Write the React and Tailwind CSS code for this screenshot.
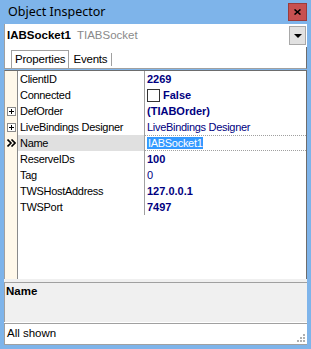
import React from 'react';

const rows = [
  { name: 'ClientID', value: '2269', bold: true },
  { name: 'Connected', value: 'False', bold: true, check: true },
  { name: 'DefOrder', value: '(TIABOrder)', bold: true, plus: true },
  { name: 'LiveBindings Designer', value: 'LiveBindings Designer', plus: true },
  { name: 'Name', value: 'IABSocket1', selected: true },
  { name: 'ReserveIDs', value: '100', bold: true },
  { name: 'Tag', value: '0' },
  { name: 'TWSHostAddress', value: '127.0.0.1', bold: true },
  { name: 'TWSPort', value: '7497', bold: true },
];

const PlusBox = () => (
  <svg width="9" height="9" viewBox="0 0 9 9" className="block">
    <rect x="0.5" y="0.5" width="8" height="8" fill="#fff" stroke="#8a8a8a" />
    <path d="M2 4.5h5M4.5 2v5" stroke="#000" strokeWidth="1" />
  </svg>
);

const Chevrons = () => (
  <svg width="9" height="8" viewBox="0 0 9 8" className="block">
    <path d="M0.5 0.5l3.5 3.5-3.5 3.5M4.5 0.5l3.5 3.5-3.5 3.5" fill="none" stroke="#000" strokeWidth="1.6" />
  </svg>
);

const Grip = () => (
  <svg width="10" height="10" viewBox="0 0 10 10" className="block">
    <g fill="#b0b0b0">
      <rect x="7" y="1" width="2" height="2" />
      <rect x="4" y="4" width="2" height="2" />
      <rect x="7" y="4" width="2" height="2" />
      <rect x="1" y="7" width="2" height="2" />
      <rect x="4" y="7" width="2" height="2" />
      <rect x="7" y="7" width="2" height="2" />
    </g>
  </svg>
);

export default function App() {
  return (
    <div
      className="w-[311px] h-[349px] bg-[#7eb4ea] flex flex-col px-[4px] pb-[4px] text-black overflow-hidden"
      style={{ fontFamily: '"Liberation Sans", Arial, sans-serif' }}
    >
      {/* Title bar */}
      <div className="h-[24px] flex items-start justify-between shrink-0">
        <span className="pl-[4px] pt-[4px] text-[12.5px] leading-[16px]" style={{ fontFamily: '"Noto Sans", sans-serif' }}>
          Object Inspector
        </span>
        <div className="mt-[3px] w-[19px] h-[18px] bg-[#c75050] border border-[#9b3b3b] flex items-center justify-center">
          <svg width="7" height="6" viewBox="0 0 7 6">
            <path d="M0.5 0.5l6 5M6.5 0.5l-6 5" stroke="#000" strokeWidth="1.6" />
          </svg>
        </div>
      </div>

      {/* Component combo */}
      <div className="h-[23px] bg-white flex items-center justify-between shrink-0 border-l border-[#a0a0a0]">
        <div className="flex items-baseline gap-[6px] pl-[2px] text-[11.5px]">
          <span className="font-bold">IABSocket1</span>
          <span className="text-[#8a8a8a]">TIABSocket</span>
        </div>
        <div className="w-[17px] h-[19px] mr-[1px] bg-[#e1e1e1] border border-[#a8a8a8] flex items-center justify-center">
          <svg width="8" height="4" viewBox="0 0 8 4">
            <path d="M0 0h8L4 4z" fill="#000" />
          </svg>
        </div>
      </div>

      {/* Tabs */}
      <div className="h-[22px] bg-white flex items-end shrink-0 border-b border-[#a0a0a0] border-l border-r border-l-[#a0a0a0] border-r-[#6d6d6d] text-[11.5px] tracking-[-0.2px]">
        <div className="ml-[6px] h-[18px] px-[3px] border border-b-0 border-[#a0a0a0] bg-white flex items-center">
          Properties
        </div>
        <div className="h-[13px] mb-[2px] px-[4px] border-r border-[#a0a0a0] flex items-center">Events</div>
      </div>

      {/* Grid */}
      <div className="mt-[1px] flex-1 flex flex-col bg-white border-t border-[#6d6d6d] border-l border-l-[#a0a0a0] border-r border-r-[#6d6d6d] text-[11px] leading-[14px]">
        {rows.map((r) => (
          <div key={r.name} className="flex h-[16px]">
            <div className="w-[13px] bg-[#fff8ea] border-r border-[#8a8a8a] flex items-center justify-center">
              {r.plus && <PlusBox />}
              {r.selected && <Chevrons />}
            </div>
            <div
              className={`w-[127px] border-r border-[#a0a0a0] pl-[2px] flex items-center tracking-[-0.3px] ${
                r.selected ? 'bg-[#e0e0e0]' : ''
              }`}
            >
              {r.name}
            </div>
            <div
              className={`flex-1 pl-[2px] flex items-center text-[#000080] ${r.bold ? 'font-bold' : 'tracking-[-0.3px]'} ${
                r.selected ? 'border-y border-dotted border-[#a0a0a0]' : ''
              }`}
            >
              {r.check && <span className="w-[13px] h-[13px] border border-[#333] bg-white mr-[3px] shrink-0" />}
              {r.selected ? <span className="bg-[#3399ff] text-white px-[1px] leading-[12px]">{r.value}</span> : r.value}
            </div>
          </div>
        ))}
        <div className="flex-1 flex">
          <div className="w-[13px] bg-[#fff8ea] border-r border-[#8a8a8a]" />
        </div>
      </div>

      {/* Description */}
      <div className="h-[3px] bg-[#f0f0f0] shrink-0" />
      <div className="h-[40px] bg-[#f0f0f0] border-t border-l border-[#a0a0a0] shrink-0 px-[1px] text-[11.5px] font-bold leading-[14px] pt-[1px]">
        Name
      </div>
      <div className="h-[1px] bg-white shrink-0" />

      {/* Status */}
      <div className="h-[22px] bg-white border-t border-b border-l border-[#a0a0a0] shrink-0 flex items-center justify-between pl-[2px] text-[11.5px]">
        <span>All shown</span>
        <div className="self-end mb-[1px] mr-[1px]">
          <Grip />
        </div>
      </div>
    </div>
  );
}
